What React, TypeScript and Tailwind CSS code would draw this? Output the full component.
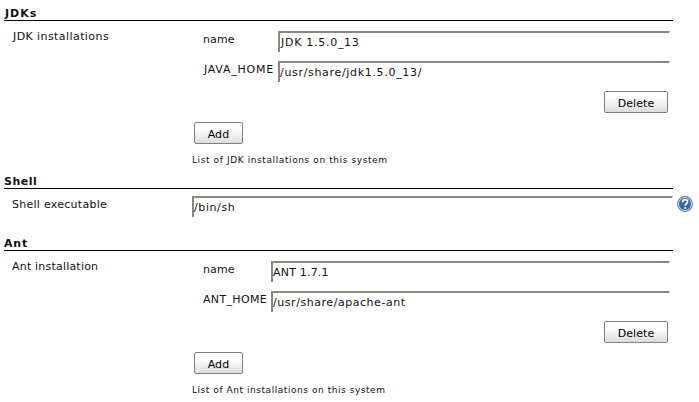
import React from "react";

function SectionHeader({ children, spacing }: { children: React.ReactNode; spacing: string }) {
  return (
    <h2
      className={`mr-[26px] ml-1 flex h-[21px] items-end border-b border-black text-[11px] leading-[13px] font-bold ${spacing}`}
    >
      {children}
    </h2>
  );
}

function Field({ value, spacing }: { value: string; spacing: string }) {
  return (
    <div className="flex h-[21px] min-w-0 flex-1 items-start border-t-2 border-r border-l-2 border-t-[#888880] border-r-white border-l-[#888880] pt-[3px] text-[11px] leading-[13px] whitespace-nowrap">
      <span className={spacing}>{value}</span>
    </div>
  );
}

function Button({ label, className }: { label: string; className: string }) {
  return (
    <button
      className={`h-[22px] rounded-[2px] border border-[#808080] bg-linear-to-b from-white from-30% to-[#dcdcdc] pt-[2px] text-[11px] leading-[13px] text-black ${className}`}
    >
      {label}
    </button>
  );
}

function HelpIcon() {
  return (
    <svg className="ml-1 h-4 w-4" viewBox="0 0 16 16">
      <circle cx="8" cy="8" r="7.9" fill="#4a74ac" />
      <circle cx="8" cy="8" r="6.5" fill="#3a66a5" stroke="#dbe5f1" strokeWidth="1" />
      <path
        d="M5.4 6.2C5.5 4.4 6.6 3.6 8.1 3.6C9.7 3.6 10.6 4.5 10.6 5.7C10.6 7.5 8.2 7.5 8.2 9.6"
        fill="none"
        stroke="white"
        strokeWidth="1.7"
      />
      <circle cx="8.2" cy="11.8" r="1.1" fill="white" />
    </svg>
  );
}

interface Entry {
  text: string;
  spacing: string;
}

interface InstallationProps {
  label: Entry;
  homeLabel: Entry;
  name: Entry;
  home: Entry;
  help: Entry;
  labelWidth: string;
}

function Installation({ label, homeLabel, name, home, help, labelWidth }: InstallationProps) {
  return (
    <div className="flex h-[147px] pr-[29px] pl-3">
      <div className={`w-[180px] shrink-0 pt-[9px] leading-[13px] ${label.spacing}`}>{label.text}</div>
      <div className="flex min-w-0 flex-1 flex-col pt-[10px]">
        <div className="flex h-[30px] pl-[11px]">
          <div className={`shrink-0 pt-[2px] leading-[13px] tracking-[0.1px] ${labelWidth}`}>name</div>
          <Field value={name.text} spacing={name.spacing} />
        </div>
        <div className="flex h-[30px] pl-[11px]">
          <div className={`shrink-0 pt-[2px] leading-[13px] ${homeLabel.spacing} ${labelWidth}`}>
            {homeLabel.text}
          </div>
          <Field value={home.text} spacing={home.spacing} />
        </div>
        <div className="flex h-[31px] justify-end pr-[2px]">
          <Button label="Delete" className="w-16 tracking-[0.1px]" />
        </div>
        <div className="pl-[2px]">
          <Button label="Add" className="w-[49px] tracking-[0.1px]" />
        </div>
        <p className={`pt-[10px] text-[9px] leading-[13px] ${help.spacing}`}>{help.text}</p>
      </div>
    </div>
  );
}

export default function App() {
  return (
    <main className="h-[402px] w-[699px] overflow-hidden bg-white font-['DejaVu_Sans',sans-serif] text-[11px] text-[#111111]">
      <SectionHeader spacing="pl-px tracking-[1px]">JDKs</SectionHeader>
      <Installation
        label={{ text: "JDK installations", spacing: "pl-px tracking-[0.42px]" }}
        homeLabel={{ text: "JAVA_HOME", spacing: "pl-px tracking-[0.75px]" }}
        name={{ text: "JDK 1.5.0_13", spacing: "pl-px tracking-[0.72px]" }}
        home={{ text: "/usr/share/jdk1.5.0_13/", spacing: "tracking-[0.68px]" }}
        help={{ text: "List of JDK installations on this system", spacing: "tracking-[0.6px]" }}
        labelWidth="w-[75px]"
      />
      <SectionHeader spacing="tracking-[0.5px]">Shell</SectionHeader>
      <div className="flex h-[41px] pt-[7px] pr-[6px] pl-3">
        <div className="w-[180px] shrink-0 pt-[2px] leading-[13px] tracking-[0.27px]">Shell executable</div>
        <Field value="/bin/sh" spacing="tracking-[0.6px]" />
        <HelpIcon />
      </div>
      <SectionHeader spacing="tracking-[0.8px]">Ant</SectionHeader>
      <Installation
        label={{ text: "Ant installation", spacing: "tracking-[0.2px]" }}
        homeLabel={{ text: "ANT_HOME", spacing: "tracking-[0.35px]" }}
        name={{ text: "ANT 1.7.1", spacing: "tracking-[0.2px]" }}
        home={{ text: "/usr/share/apache-ant", spacing: "tracking-[0.55px]" }}
        help={{ text: "List of Ant installations on this system", spacing: "tracking-[0.55px]" }}
        labelWidth="w-[68px]"
      />
    </main>
  );
}
